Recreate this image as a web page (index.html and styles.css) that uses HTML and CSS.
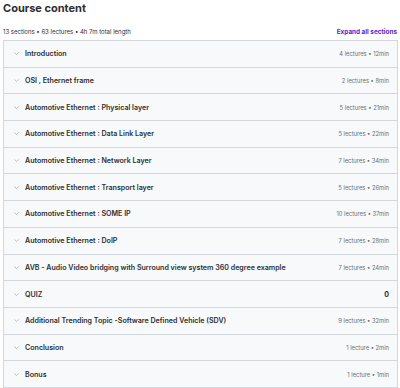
FILE: index.html
```html
<!DOCTYPE html>
<html lang="en">
<head>
    <meta charset="UTF-8">
    <meta name="viewport" content="width=device-width, initial-scale=1.0">
    <title>Course content</title>
    <link rel="stylesheet" href="styles.css">
</head>
<body>
    <div class="course-content">
        <h2 class="title">Course content</h2>
        <div class="summary">
            <span>13 sections • 63 lectures • 4h 7m total length</span>
            <a class="expand" href="#">Expand all sections</a>
        </div>

        <div class="sections">
            <div class="section">
                <span class="chevron"><svg viewBox="0 0 10 6" width="5" height="3"><path d="M1 1l4 4 4-4" /></svg></span>
                <span class="section-title">Introduction</span>
                <span class="section-meta">4 lectures • 12min</span>
            </div>
            <div class="section">
                <span class="chevron"><svg viewBox="0 0 10 6" width="5" height="3"><path d="M1 1l4 4 4-4" /></svg></span>
                <span class="section-title">OSI , Ethernet frame</span>
                <span class="section-meta">2 lectures • 8min</span>
            </div>
            <div class="section">
                <span class="chevron"><svg viewBox="0 0 10 6" width="5" height="3"><path d="M1 1l4 4 4-4" /></svg></span>
                <span class="section-title">Automotive Ethernet : Physical layer</span>
                <span class="section-meta">5 lectures • 21min</span>
            </div>
            <div class="section">
                <span class="chevron"><svg viewBox="0 0 10 6" width="5" height="3"><path d="M1 1l4 4 4-4" /></svg></span>
                <span class="section-title">Automotive Ethernet : Data Link Layer</span>
                <span class="section-meta">5 lectures • 22min</span>
            </div>
            <div class="section">
                <span class="chevron"><svg viewBox="0 0 10 6" width="5" height="3"><path d="M1 1l4 4 4-4" /></svg></span>
                <span class="section-title">Automotive Ethernet : Network Layer</span>
                <span class="section-meta">7 lectures • 34min</span>
            </div>
            <div class="section">
                <span class="chevron"><svg viewBox="0 0 10 6" width="5" height="3"><path d="M1 1l4 4 4-4" /></svg></span>
                <span class="section-title">Automotive Ethernet : Transport layer</span>
                <span class="section-meta">5 lectures • 26min</span>
            </div>
            <div class="section">
                <span class="chevron"><svg viewBox="0 0 10 6" width="5" height="3"><path d="M1 1l4 4 4-4" /></svg></span>
                <span class="section-title">Automotive Ethernet : SOME IP</span>
                <span class="section-meta">10 lectures • 37min</span>
            </div>
            <div class="section">
                <span class="chevron"><svg viewBox="0 0 10 6" width="5" height="3"><path d="M1 1l4 4 4-4" /></svg></span>
                <span class="section-title">Automotive Ethernet : DoIP</span>
                <span class="section-meta">7 lectures • 28min</span>
            </div>
            <div class="section">
                <span class="chevron"><svg viewBox="0 0 10 6" width="5" height="3"><path d="M1 1l4 4 4-4" /></svg></span>
                <span class="section-title">AVB - Audio Video bridging with Surround view system 360 degree example</span>
                <span class="section-meta">7 lectures • 24min</span>
            </div>
            <div class="section">
                <span class="chevron"><svg viewBox="0 0 10 6" width="5" height="3"><path d="M1 1l4 4 4-4" /></svg></span>
                <span class="section-title">QUIZ</span>
                <span class="section-meta strong">0</span>
            </div>
            <div class="section">
                <span class="chevron"><svg viewBox="0 0 10 6" width="5" height="3"><path d="M1 1l4 4 4-4" /></svg></span>
                <span class="section-title">Additional Trending Topic -Software Defined Vehicle (SDV)</span>
                <span class="section-meta">9 lectures • 32min</span>
            </div>
            <div class="section">
                <span class="chevron"><svg viewBox="0 0 10 6" width="5" height="3"><path d="M1 1l4 4 4-4" /></svg></span>
                <span class="section-title">Conclusion</span>
                <span class="section-meta">1 lecture • 2min</span>
            </div>
            <div class="section">
                <span class="chevron"><svg viewBox="0 0 10 6" width="5" height="3"><path d="M1 1l4 4 4-4" /></svg></span>
                <span class="section-title">Bonus</span>
                <span class="section-meta">1 lecture • 1min</span>
            </div>
        </div>
    </div>
</body>
</html>
```

FILE: styles.css
```css
:root {
    --text-color: #2d2f31;
    --text-secondary: #6a6f73;
    --border-color: #d1d7dc;
    --surface-color: #f7f9fa;
    --accent-color: #5624d0;
}

* {
    margin: 0;
    padding: 0;
    box-sizing: border-box;
}

body {
    font-family: 'Inter', 'Noto Sans', sans-serif;
    background-color: #ffffff;
    color: var(--text-color);
    width: 400px;
    height: 388px;
    overflow: hidden;
}

.course-content {
    padding: 0 2px 0 3px;
}

.title {
    font-size: 11px;
    font-weight: 700;
    line-height: 14px;
    padding-top: 1px;
}

.summary {
    display: flex;
    justify-content: space-between;
    align-items: center;
    height: 25px;
    padding-top: 8px;
    font-size: 6px;
    color: var(--text-color);
}

.expand {
    color: var(--accent-color);
    font-weight: 700;
    font-size: 6.4px;
    text-decoration: none;
    margin-right: 1px;
}

.sections {
    border: 1px solid var(--border-color);
    border-bottom: none;
}

.section {
    display: flex;
    align-items: center;
    height: 26.7px;
    padding: 0 8px 0 10px;
    background-color: var(--surface-color);
    border-bottom: 1px solid var(--border-color);
}

.chevron {
    display: flex;
    align-items: center;
    width: 11px;
}

.chevron svg {
    fill: none;
    stroke: #9da3a7;
    stroke-width: 1.3;
}

.section-title {
    flex: 1;
    font-size: 7.1px;
    font-weight: 600;
    color: var(--text-color);
    white-space: nowrap;
}

.section-meta {
    font-size: 5.8px;
    color: var(--text-secondary);
    white-space: nowrap;
}

.section-meta.strong {
    font-size: 7px;
    font-weight: 700;
    color: var(--text-color);
}
```
